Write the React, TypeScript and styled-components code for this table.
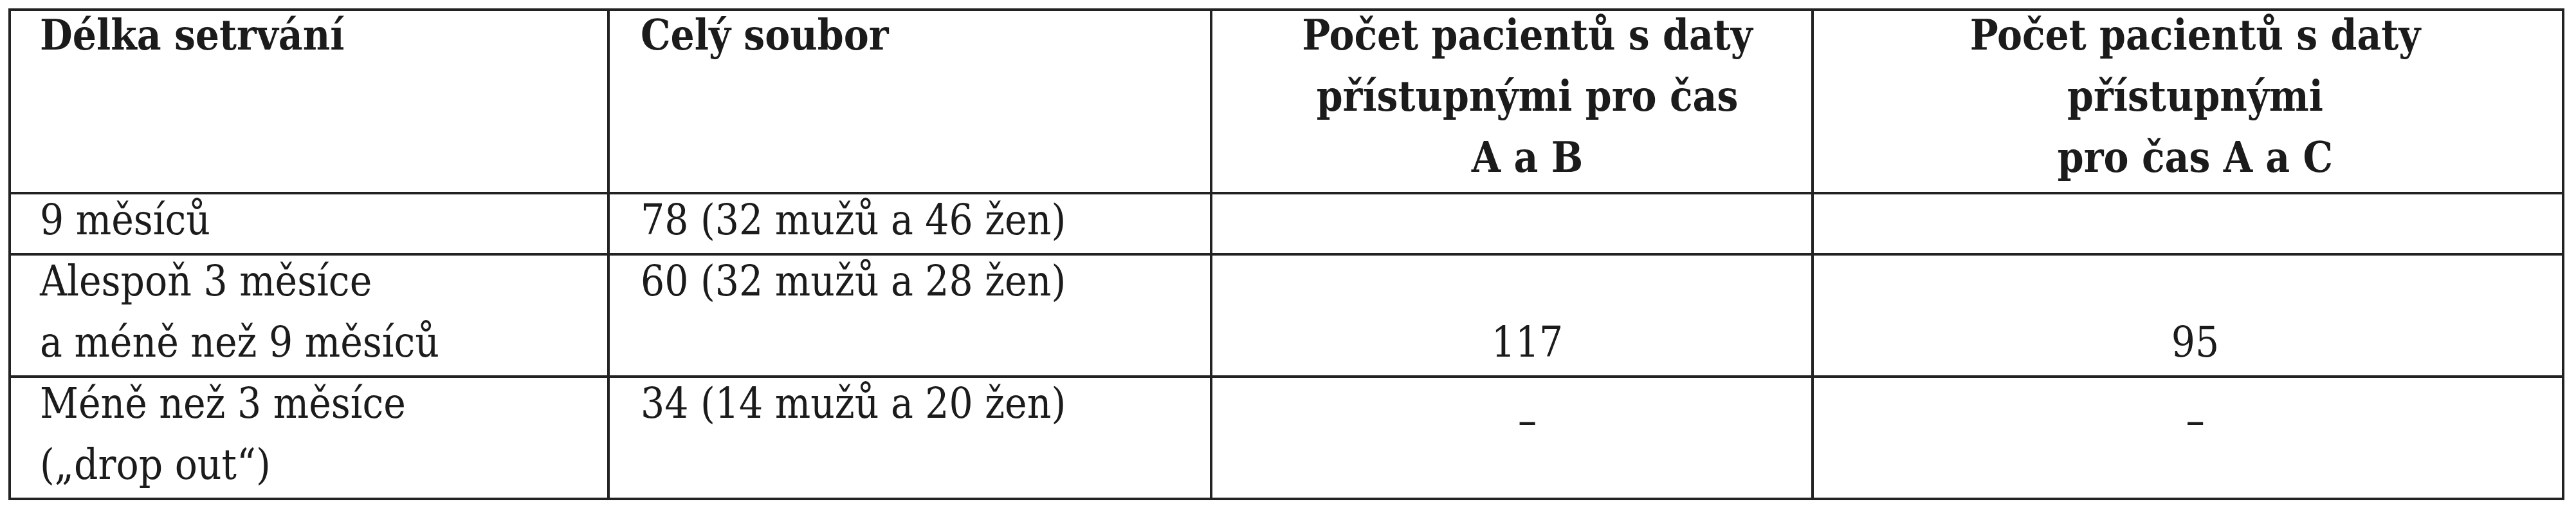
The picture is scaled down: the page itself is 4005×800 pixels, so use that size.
import React from 'react';
import styled, { createGlobalStyle } from 'styled-components';

const GlobalStyle = createGlobalStyle`
  html, body {
    margin: 0;
    padding: 0;
    background: #ffffff;
  }
  body {
    font-family: "DejaVu Serif Condensed", "DejaVu Serif", serif;
    font-stretch: condensed;
    color: #1b1b1b;
  }
`;

type Align = 'left' | 'center';

type Row = {
  height: number;
  cells: CellData[];
};

type CellData = {
  lines: string[];
  align?: Align;
  bottom?: boolean;
  offset?: number;
};

const columns = [931, 937, 935, 1167];
const padding: [number, number][] = [
  [45, 0],
  [48, 0],
  [48, 0],
  [48, 25],
];

const header: CellData[] = [
  { lines: ['Délka setrvání'] },
  { lines: ['Celý soubor'] },
  { lines: ['Počet pacientů s daty', 'přístupnými pro čas', 'A a B'], align: 'center' },
  { lines: ['Počet pacientů s daty', 'přístupnými', 'pro čas A a C'], align: 'center' },
];

const rows: Row[] = [
  {
    height: 95,
    cells: [
      { lines: ['9 měsíců'] },
      { lines: ['78 (32 mužů a 46 žen)'] },
      { lines: [], align: 'center' },
      { lines: [], align: 'center' },
    ],
  },
  {
    height: 190,
    cells: [
      { lines: ['Alespoň 3 měsíce', 'a méně než 9 měsíců'] },
      { lines: ['60 (32 mužů a 28 žen)'] },
      { lines: ['117'], align: 'center', bottom: true },
      { lines: ['95'], align: 'center', bottom: true },
    ],
  },
  {
    height: 190,
    cells: [
      { lines: ['Méně než 3 měsíce', '(„drop out“)'] },
      { lines: ['34 (14 mužů a 20 žen)'] },
      { lines: ['–'], align: 'center', offset: 26 },
      { lines: ['–'], align: 'center', offset: 26 },
    ],
  },
];

export default function App() {
  return (
    <>
      <GlobalStyle />
      <Page>
        <Grid $columns={columns} $rows={[285, ...rows.map((r) => r.height)]}>
          {header.map((cell, i) => (
            <Cell key={`h${i}`} $align={cell.align ?? 'left'} $pad={padding[i]} $last={i === 3} $bottomRow={false}>
              <HeadText>
                {cell.lines.map((l, j) => (
                  <Line key={j}>{l}</Line>
                ))}
              </HeadText>
            </Cell>
          ))}
          {rows.map((row, r) =>
            row.cells.map((cell, i) => (
              <Cell
                key={`r${r}c${i}`}
                $align={cell.align ?? 'left'}
                $pad={padding[i]}
                $last={i === 3}
                $bottomRow={r === rows.length - 1}
                $end={cell.bottom}
              >
                <BodyText $offset={cell.offset ?? 0} $end={cell.bottom}>
                  {cell.lines.map((l, j) => (
                    <Line key={j}>{l}</Line>
                  ))}
                </BodyText>
              </Cell>
            ))
          )}
        </Grid>
      </Page>
    </>
  );
}

const Page = styled.div`
  padding: 13px;
`;

const Grid = styled.div<{ $columns: number[]; $rows: number[] }>`
  display: grid;
  grid-template-columns: ${(p) => p.$columns.map((c) => `${c}px`).join(' ')};
  grid-template-rows: ${(p) => p.$rows.map((r) => `${r}px`).join(' ')};
  width: max-content;
  border-top: 4px solid #222;
  border-left: 4px solid #222;
`;

const Cell = styled.div<{ $align: Align; $pad: [number, number]; $last: boolean; $bottomRow: boolean; $end?: boolean }>`
  box-sizing: border-box;
  display: flex;
  flex-direction: column;
  justify-content: ${(p) => (p.$end ? 'flex-end' : 'flex-start')};
  border-right: 4px solid #222;
  border-bottom: 4px solid #222;
  padding-left: ${(p) => p.$pad[0]}px;
  padding-right: ${(p) => p.$pad[1]}px;
  text-align: ${(p) => p.$align};
  overflow: hidden;
`;

const HeadText = styled.div`
  font-size: 65px;
  font-weight: bold;
  line-height: 95px;
  margin-top: -10px;
  white-space: nowrap;
`;

const BodyText = styled.div<{ $offset: number; $end?: boolean }>`
  font-size: 65px;
  font-weight: normal;
  line-height: 95px;
  margin-top: ${(p) => (p.$end ? 0 : p.$offset - 8)}px;
  padding-bottom: ${(p) => (p.$end ? 4 : 0)}px;
  white-space: nowrap;
`;

const Line = styled.div``;
